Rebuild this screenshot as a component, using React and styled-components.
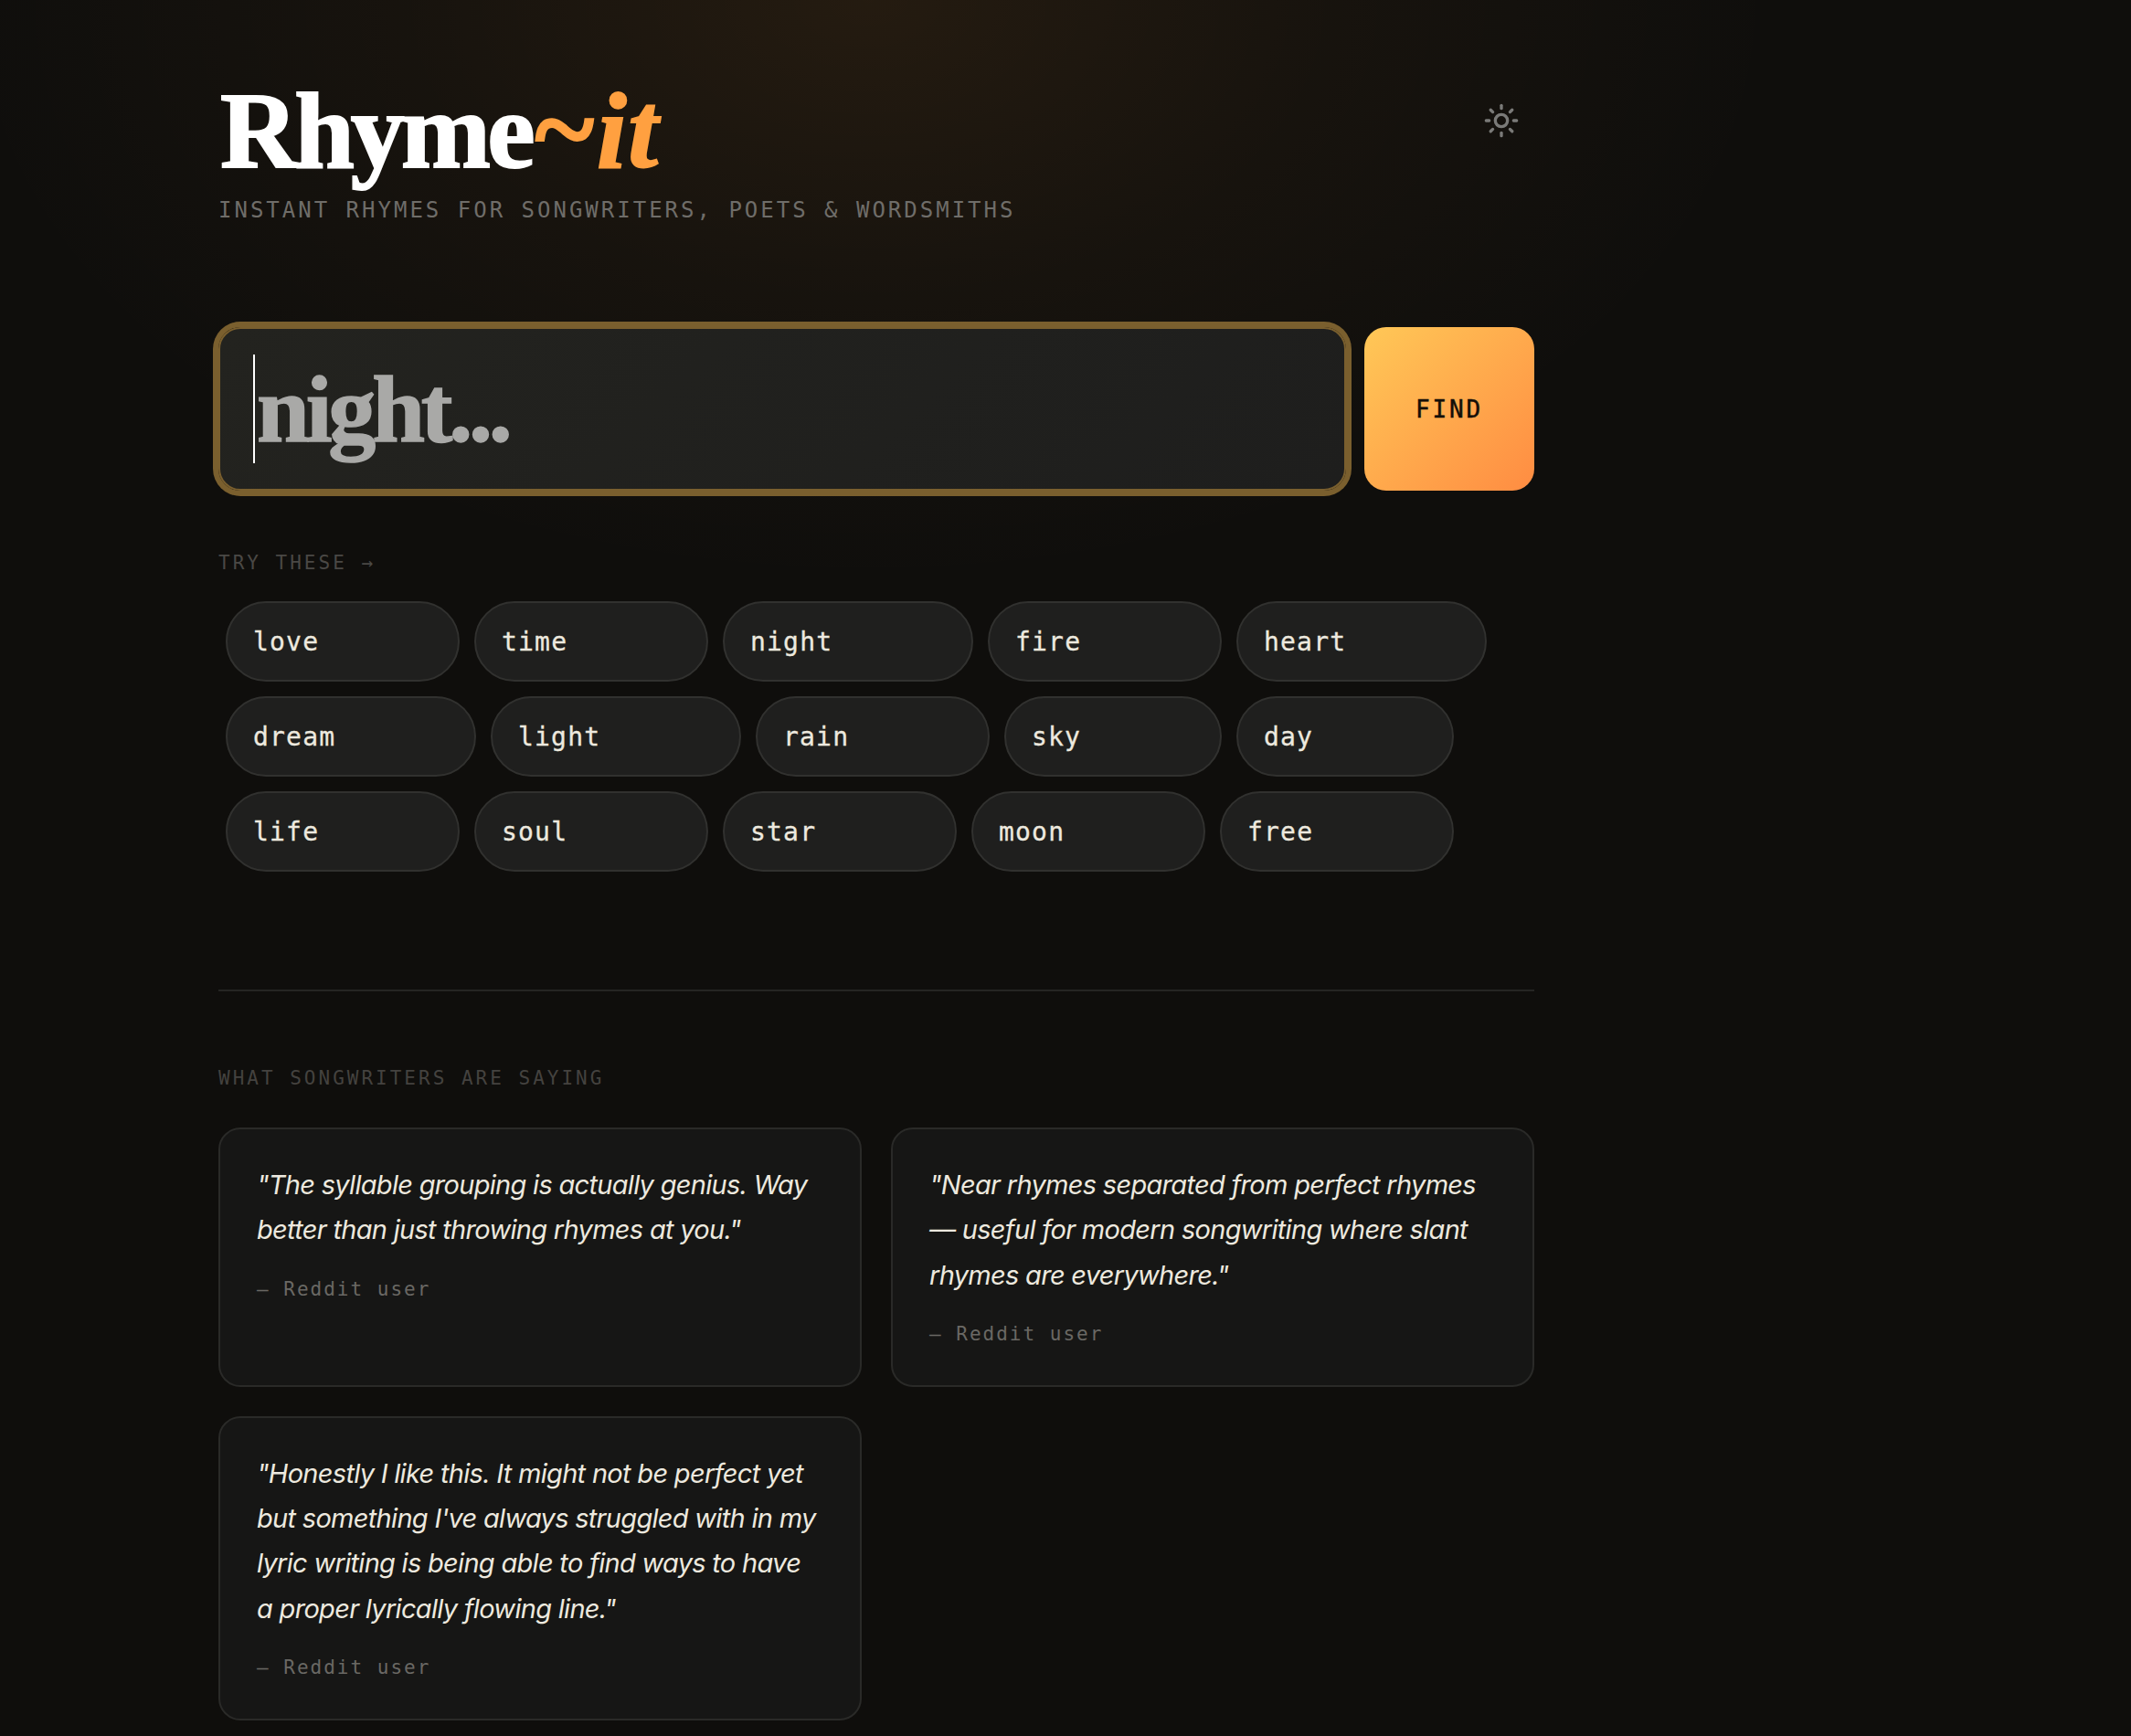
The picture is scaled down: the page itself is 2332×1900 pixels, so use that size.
import React from 'react';
import styled, { createGlobalStyle } from 'styled-components';
import { Sun } from 'lucide-react';

const SERIF = `"Liberation Serif", "Times New Roman", serif`;
const MONO = `"DejaVu Sans Mono", "Liberation Mono", monospace`;
const SANS = `"Inter", "Noto Sans", sans-serif`;

const GlobalStyle = createGlobalStyle`
  html, body {
    margin: 0;
    padding: 0;
    background: #0f0e0c;
  }
  * {
    box-sizing: border-box;
  }
`;

const Page = styled.div`
  min-height: 1900px;
  padding: 81px 239px 0;
  background:
    radial-gradient(
      ellipse 1000px 640px at 950px 0,
      rgba(255, 160, 60, 0.09),
      rgba(255, 160, 60, 0.035) 50%,
      rgba(255, 160, 60, 0) 100%
    ),
    #0f0e0c;
`;

const Main = styled.main`
  width: 1440px;
`;

const Header = styled.header`
  display: flex;
  justify-content: space-between;
  align-items: flex-start;
  margin-bottom: 113px;
`;

const Title = styled.h1`
  margin: 0 0 0 2px;
  font-family: ${SERIF};
  font-size: 118px;
  line-height: 126px;
  font-weight: 700;
  letter-spacing: -4px;
  color: #ffffff;
  -webkit-text-stroke: 2px currentColor;
`;

const Tilde = styled.span`
  margin-left: 4px;
  color: #ffa040;
  font-size: 124px;
  line-height: 0;
  letter-spacing: 3px;
`;

const Italic = styled.span`
  color: #ffa040;
  font-style: italic;
  letter-spacing: 1.5px;
`;

const Tagline = styled.p`
  margin: 8px 0 0;
  font-family: ${MONO};
  font-size: 24px;
  line-height: 30px;
  letter-spacing: 3px;
  color: #6f6d69;
  text-transform: uppercase;
`;

const ThemeButton = styled.button`
  display: flex;
  margin: 31px 16px 0 0;
  padding: 0;
  border: 0;
  background: none;
  color: #7a7a78;
  cursor: pointer;
`;

const SearchRow = styled.form`
  display: flex;
  gap: 20px;
  margin-bottom: 65px;
`;

const Field = styled.div`
  position: relative;
  flex: 1;
  height: 179px;
  border: 2px solid #7a5f2e;
  border-radius: 24px;
  box-shadow: 0 0 0 6px #7a5f2e;
  background: linear-gradient(135deg, #23231f, #1e1e1d);
`;

const SearchInput = styled.input`
  display: block;
  width: 100%;
  height: 100%;
  padding: 0 36px 0 40px;
  border: 0;
  outline: 0;
  background: none;
  font-family: ${SERIF};
  font-size: 104px;
  font-weight: 700;
  letter-spacing: -4.2px;
  color: #ffffff;
  caret-color: transparent;
  &::placeholder {
    color: #a9a9a7;
    opacity: 1;
    -webkit-text-stroke: 1.5px #a9a9a7;
  }
`;

const Caret = styled.span`
  position: absolute;
  left: 36px;
  top: 28px;
  width: 2px;
  height: 119px;
  background: #ffffff;
`;

const FindButton = styled.button`
  width: 186px;
  border: 0;
  border-radius: 24px;
  background: linear-gradient(135deg, #ffc857, #ff8c42);
  font-family: ${MONO};
  font-size: 26px;
  letter-spacing: 2.8px;
  color: #140f08;
  -webkit-text-stroke: 0.5px currentColor;
  cursor: pointer;
`;

const Label = styled.div`
  font-family: ${MONO};
  font-size: 21px;
  line-height: 28px;
  letter-spacing: 3px;
  color: ${(p) => p.$color};
  text-transform: uppercase;
`;

const Chips = styled.div`
  display: flex;
  flex-wrap: wrap;
  gap: 16px;
  margin: 28px 0 129px 8px;
`;

const Chip = styled.button`
  height: 88px;
  padding: 0 0 0 28px;
  width: ${(p) => p.$chars * 18 + 184}px;
  border: 2px solid #31312f;
  border-radius: 44px;
  background: #1f1f1e;
  font-family: ${MONO};
  font-size: 28px;
  letter-spacing: 1.2px;
  text-align: left;
  color: #ede9df;
  -webkit-text-stroke: 0.3px currentColor;
  cursor: pointer;
`;

const Divider = styled.hr`
  height: 2px;
  margin: 0 0 81px;
  border: 0;
  background: #252523;
`;

const Cards = styled.div`
  display: grid;
  grid-template-columns: 1fr 1fr;
  gap: 32px;
  margin-top: 40px;
`;

const Card = styled.article`
  padding: 36px 42px 40px 40px;
  border: 2px solid #2a2a28;
  border-radius: 24px;
  background: #161615;
`;

const Quote = styled.p`
  margin: 0 0 24px;
  font-family: ${SANS};
  font-size: 29px;
  line-height: 49.3px;
  font-style: italic;
  letter-spacing: -0.7px;
  color: #ede9df;
`;

const Author = styled.div`
  font-family: ${MONO};
  font-size: 21px;
  line-height: 32px;
  letter-spacing: 2px;
  color: #6a6864;
`;

const CHIPS = ['love', 'time', 'night', 'fire', 'heart', 'dream', 'light', 'rain', 'sky', 'day', 'life', 'soul', 'star', 'moon', 'free'];

const QUOTES = [
  '"The syllable grouping is actually genius. Way better than just throwing rhymes at you."',
  '"Near rhymes separated from perfect rhymes — useful for modern songwriting where slant rhymes are everywhere."',
  '"Honestly I like this. It might not be perfect yet but something I\'ve always struggled with in my lyric writing is being able to find ways to have a proper lyrically flowing line."',
];

export default function App() {
  return (
    <Page>
      <GlobalStyle />
      <Main>
        <Header>
          <div>
            <Title>
              Rhyme<Tilde>~</Tilde>
              <Italic>it</Italic>
            </Title>
            <Tagline>Instant rhymes for songwriters, poets &amp; wordsmiths</Tagline>
          </div>
          <ThemeButton type="button" aria-label="Toggle theme">
            <Sun size={40} strokeWidth={2} />
          </ThemeButton>
        </Header>

        <SearchRow onSubmit={(e) => e.preventDefault()}>
          <Field>
            <SearchInput type="text" placeholder="night..." />
            <Caret />
          </Field>
          <FindButton type="submit">FIND</FindButton>
        </SearchRow>

        <Label $color="#4a4845">Try these →</Label>
        <Chips>
          {CHIPS.map((word) => (
            <Chip key={word} type="button" $chars={word.length}>
              {word}
            </Chip>
          ))}
        </Chips>

        <Divider />

        <Label $color="#44423f">What songwriters are saying</Label>
        <Cards>
          {QUOTES.map((quote) => (
            <Card key={quote}>
              <Quote>{quote}</Quote>
              <Author>— Reddit user</Author>
            </Card>
          ))}
        </Cards>
      </Main>
    </Page>
  );
}
